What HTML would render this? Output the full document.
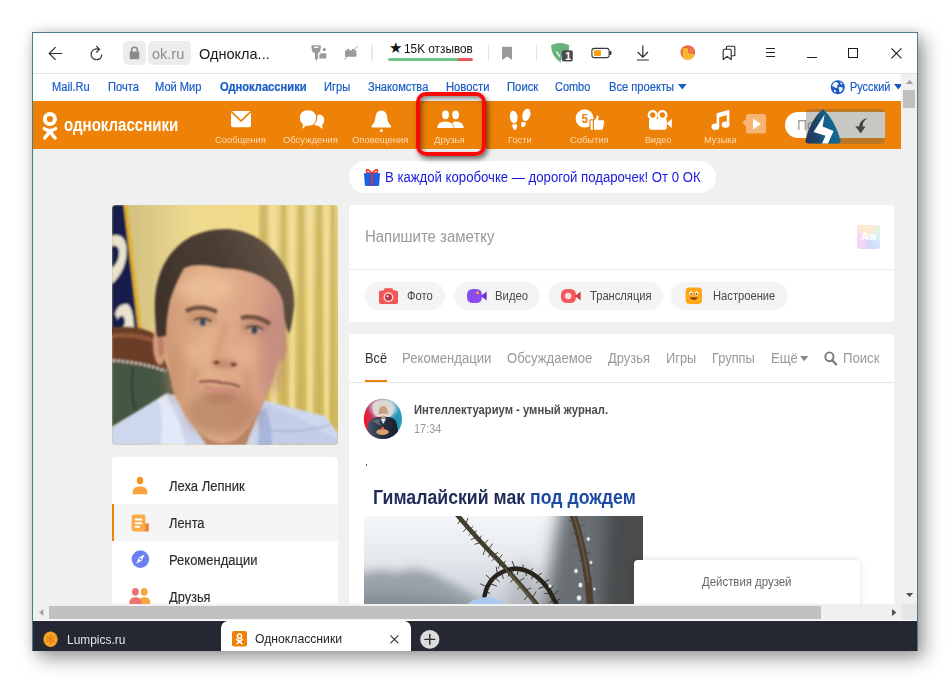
<!DOCTYPE html>
<html lang="ru">
<head>
<meta charset="utf-8">
<title>Одноклассники</title>
<style>
*{box-sizing:border-box;margin:0;padding:0}
html,body{width:950px;height:683px;overflow:hidden;background:#fff}
body{position:relative;font-family:"Liberation Sans",sans-serif;color:#333}
.a{position:absolute;white-space:nowrap;line-height:1}
.t{position:absolute;white-space:nowrap;line-height:1;transform-origin:0 0}
svg{position:absolute;overflow:visible}
#win{position:absolute;left:32px;top:32px;width:886px;height:619px;background:#fff;border:1px solid #4d7b89;border-bottom:none;box-shadow:6px 7px 18px rgba(0,0,0,.40),0 0 9px rgba(0,0,0,.11)}
#view{position:absolute;left:33px;top:74px;width:868px;height:530px;background:#f0f0f0;overflow:hidden}
.card{position:absolute;background:#fff;border-radius:4px}
.pill{position:absolute;background:#f4f4f4;border-radius:14px;height:28px;top:281.6px}
.nl{position:absolute;white-space:nowrap;line-height:1;font-size:12px;color:#1b5dc6;top:80.8px;transform-origin:0 0;-webkit-text-stroke:.2px #1b5dc6}
.hl{position:absolute;white-space:nowrap;line-height:1;font-size:9.5px;color:#fbdcb6;top:135px;text-align:center;transform-origin:0 0}
.tab{position:absolute;white-space:nowrap;line-height:1;font-size:14px;color:#999;top:351px;transform-origin:0 0}
.mi{position:absolute;white-space:nowrap;line-height:1;font-size:14px;color:#2b2b2b;-webkit-text-stroke:.15px #2b2b2b;left:169px;transform-origin:0 0}
.pt{position:absolute;white-space:nowrap;line-height:1;font-size:12px;color:#484848;top:290px;transform-origin:0 0}
</style>
</head>
<body>
<div id="win"></div>

<!-- ===== browser toolbar ===== -->
<div id="toolbar">
<div class="a" style="left:33px;top:73px;width:884px;height:1px;background:#e2e2e2"></div>
<!-- back -->
<svg style="left:46px;top:44px" width="20" height="20" viewBox="0 0 20 20"><path d="M16.2 9.5H3.4M9.6 3.1L3.2 9.5l6.4 6.4" fill="none" stroke="#2b2b2b" stroke-width="1.15"/></svg>
<!-- reload -->
<svg style="left:87px;top:44px" width="20" height="20" viewBox="0 0 20 20"><path d="M12.1 5.6A5.4 5.4 0 1 0 14.9 10.4" fill="none" stroke="#2b2b2b" stroke-width="1.15"/><path d="M9.3 2.2L12.5 5.3 9.3 8.5" fill="none" stroke="#2b2b2b" stroke-width="1.15"/></svg>
<!-- lock + host -->
<div class="a" style="left:123px;top:41px;width:23px;height:24px;background:#ececec;border-radius:5px"></div>
<svg style="left:128px;top:46px" width="13" height="14" viewBox="0 0 13 14"><path d="M3.6 6V4.2a2.9 2.9 0 0 1 5.8 0V6" fill="none" stroke="#8b8b8b" stroke-width="1.6"/><rect x="1.7" y="5.6" width="9.6" height="7.6" rx="1" fill="#8b8b8b"/></svg>
<div class="a" style="left:148px;top:41px;width:43px;height:24px;background:#ececec;border-radius:5px"></div>
<div class="t" id="t_host" style="left:152px;top:46px;font-size:15px;color:#8c8c8c;transform:scaleX(0.968)">ok.ru</div>
<div class="t" id="t_title" style="left:198.8px;top:46px;font-size:15px;color:#1a1a1a;transform:scaleX(0.968)">Однокла...</div>
<!-- key icon -->
<svg style="left:310px;top:44px" width="18" height="18" viewBox="0 0 18 18"><path d="M1.3 2.6Q1.3 1.2 2.7 1.2H9.6Q11 1.2 11 2.6L10.2 7.3Q10 8.6 8.6 8.8L8 9V14.6L6.4 16.7 4.9 14.6V9L4 8.8Q2.4 8.4 2.2 7.3Z" fill="#9b9b9b"/><rect x="3.9" y="2.6" width="4.6" height="1.3" rx=".6" fill="#fff"/><circle cx="14.3" cy="5.6" r="1.7" fill="#9b9b9b"/><path d="M9.3 14.6V11.7Q9.3 9.3 11.7 9.3H16.4V14.6Z" fill="#9b9b9b"/></svg>
<!-- plugin icon -->
<svg style="left:343px;top:44px" width="18" height="18" viewBox="0 0 18 18"><path d="M2 6.6H4V5h2.6v1.6h2.2V5h2.6v1.6H13.4V12.7H2Z" fill="#9b9b9b"/><path d="M1.2 15.7L14.7 2" stroke="#9b9b9b" stroke-width="1" fill="none"/></svg>
<div class="a" style="left:371px;top:45px;width:2px;height:16px;background:#e9e9e9"></div>
<!-- reviews -->
<div class="t" id="t_star" style="left:389px;top:41px;font-size:15px;color:#111;font-family:'DejaVu Sans',sans-serif">★</div>
<div class="t" id="t_rev" style="left:403.7px;top:42.7px;font-size:12px;color:#151515;transform:scaleX(0.984)">15K отзывов</div>
<div class="a" style="left:388px;top:58px;width:70px;height:3px;background:#6fc48b;border-radius:1.5px 0 0 1.5px"></div>
<div class="a" style="left:458px;top:58px;width:15px;height:3px;background:#e9575a;border-radius:0 1.5px 1.5px 0"></div>
<div class="a" style="left:488px;top:45px;width:1px;height:16px;background:#e4e4e4"></div>
<!-- bookmark -->
<svg style="left:501px;top:46px" width="12" height="15" viewBox="0 0 12 15"><path d="M1 .8H11V14L6 10.4 1 14Z" fill="#9b9b9b"/></svg>
<div class="a" style="left:536px;top:45px;width:1px;height:16px;background:#e4e4e4"></div>
<!-- adguard shield -->
<svg style="left:550px;top:42px" width="24" height="22" viewBox="0 0 24 22"><path d="M1 3.2Q10 -1.2 19.2 3.2Q19.4 7 17.6 10.4L13 8.4L10.6 20.6Q1.4 14.5 1 3.2Z" fill="#68b37b"/><path d="M6.4 9.4L9.8 14.6" stroke="#e9f5ec" stroke-width="1.6" fill="none"/><rect x="11.8" y="8.2" width="11" height="11.4" rx="2" fill="#4b4b4b"/></svg>
<div class="a" id="t_one" style="left:565px;top:51px;font-size:11px;font-weight:bold;color:#fff">1</div>
<!-- battery -->
<svg style="left:591px;top:47px" width="21" height="12" viewBox="0 0 21 12"><rect x=".9" y="1.4" width="17.2" height="9.2" rx="2.4" fill="#fff" stroke="#3a3a3a" stroke-width="1.1"/><rect x="3" y="3.2" width="6.9" height="5.7" fill="#ffa10a"/><path d="M18.6 4.1h1q.8 0 .8.8v2.2q0 .8-.8.8h-1z" fill="#222"/></svg>
<!-- download -->
<svg style="left:636px;top:45px" width="14" height="17" viewBox="0 0 14 17"><path d="M6.8.6V12M1.6 7L6.8 12.2 12 7M1 15h11.8" fill="none" stroke="#2b2b2b" stroke-width="1.15"/></svg>
<!-- profile blob -->
<svg style="left:680px;top:45px" width="16" height="16" viewBox="0 0 16 16"><defs><clipPath id="cpb"><circle cx="7.8" cy="7.5" r="7.3"/></clipPath></defs><circle cx="7.8" cy="7.5" r="7.3" fill="#e9694b"/><g clip-path="url(#cpb)"><path d="M2.8 16V4.6L4 3.2 7.6 2.9 8.6 8.4 13.3 8.7 14.5 11V16Z" fill="#f6b92f"/><path d="M10.2 3.4L10.6 7M12 4L12.4 7.6" stroke="#f2a04a" stroke-width=".8" fill="none"/></g></svg>
<!-- collections -->
<svg style="left:722px;top:45px" width="15" height="16" viewBox="0 0 15 16"><path d="M1.2 14.6V5.4Q1.2 4.2 2.4 4.2H8Q9.2 4.2 9.2 5.4V14.6L5.2 11.4Z" fill="none" stroke="#2b2b2b" stroke-width="1.15" stroke-linejoin="round"/><path d="M4.4 4V2.4Q4.4 1.2 5.6 1.2H11.6Q12.8 1.2 12.8 2.4V10.6L9.6 11" fill="none" stroke="#2b2b2b" stroke-width="1.15"/></svg>
<!-- menu -->
<div class="a" style="left:766px;top:48px;width:9px;height:1px;background:#222;box-shadow:0 4px 0 #222,0 8px 0 #222"></div>
<!-- window controls -->
<div class="a" style="left:807px;top:57px;width:10px;height:1px;background:#222"></div>
<div class="a" style="left:848px;top:48px;width:10px;height:10px;border:1px solid #1a1a1a"></div>
<svg style="left:891px;top:48px" width="11" height="11" viewBox="0 0 11 11"><path d="M.4.4l10 10M10.4.4l-10 10" stroke="#1a1a1a" stroke-width="1.1" fill="none"/></svg>
</div>

<!-- ===== page viewport ===== -->
<div id="view"></div>

<!-- ===== mail.ru portal strip ===== -->
<div id="portal">
<div class="a" style="left:33px;top:74px;width:868px;height:27px;background:#fff"></div>
<div class="nl" id="t_n1" style="left:52px;transform:scaleX(0.927)">Mail.Ru</div>
<div class="nl" id="t_n2" style="left:107.6px;transform:scaleX(0.927)">Почта</div>
<div class="nl" id="t_n3" style="left:155.3px;transform:scaleX(0.926)">Мой Мир</div>
<div class="nl" id="t_n4" style="left:219.6px;font-weight:bold;transform:scaleX(0.931)">Одноклассники</div>
<div class="nl" id="t_n5" style="left:324.3px;transform:scaleX(0.925)">Игры</div>
<div class="nl" id="t_n6" style="left:368.4px;transform:scaleX(0.924)">Знакомства</div>
<div class="nl" id="t_n7" style="left:445.8px;transform:scaleX(0.936)">Новости</div>
<div class="nl" id="t_n8" style="left:506.5px;transform:scaleX(0.941)">Поиск</div>
<div class="nl" id="t_n9" style="left:555px;transform:scaleX(0.912)">Combo</div>
<div class="nl" id="t_n10" style="left:609.1px;transform:scaleX(0.928)">Все проекты</div>
<svg style="left:678px;top:84px" width="9" height="6" viewBox="0 0 9 6"><path d="M0 0H8.6L4.3 5.4Z" fill="#1b5dc6"/></svg>
<svg style="left:830px;top:80px" width="16" height="15" viewBox="0 0 16 15"><circle cx="7.8" cy="7.2" r="7" fill="#1b5dc6"/><path d="M3.2 3.4Q5.4 1.4 7.6 2.4L8.8 4.2 7 5.6 7.6 7.4 5.4 8 4.2 6.4 2.2 6.6Q2.2 4.6 3.2 3.4ZM9.6 6.8L12.6 7.4 12.8 9.6 10.6 12.2 9 11.6 9.4 9.4 8.4 8.2ZM10.6 2.2L12.6 3.8 11.6 4.8 10.2 3.6ZM4.2 9.6L6 10.4 5.6 12.4 4 11.4Z" fill="#fff"/></svg>
<div class="nl" id="t_n11" style="left:849.9px;transform:scaleX(0.907)">Русский</div>
<svg style="left:894px;top:84px" width="9" height="6" viewBox="0 0 9 6"><path d="M0 0H8.6L4.3 5.4Z" fill="#1b5dc6"/></svg>
</div>

<!-- ===== OK orange header ===== -->
<div id="okhead">
<div class="a" style="left:33px;top:101px;width:868px;height:48px;background:#ee8208"></div>
<!-- logo -->
<svg style="left:40px;top:110px" width="20" height="32" viewBox="0 0 20 32"><circle cx="9.9" cy="9" r="5.05" fill="none" stroke="#fff" stroke-width="3.9"/><path d="M4.3 18.6Q9.9 22.6 15.5 18.6" fill="none" stroke="#fff" stroke-width="3.5" stroke-linecap="round"/><path d="M4.7 28L9.9 21.6 15.1 28" fill="none" stroke="#fff" stroke-width="3.5" stroke-linecap="round" stroke-linejoin="round"/></svg>
<div class="t" id="t_logo" style="left:64.1px;top:116.3px;font-size:18px;font-weight:bold;color:#fff;transform:scaleX(0.836)">одноклассники</div>
<!-- messages -->
<svg style="left:231px;top:110.8px" width="20" height="17" viewBox="0 0 20 17"><rect x="0" y="0" width="20" height="16.2" rx="2" fill="#fff"/><path d="M.6 .8L10 10 19.4 .8" fill="none" stroke="#ee8208" stroke-width="1.7"/></svg>
<div class="hl" id="t_h1" style="left:215.4px;transform:scaleX(0.985)">Сообщения</div>
<!-- discussions -->
<svg style="left:299px;top:110px" width="26" height="20" viewBox="0 0 26 20"><path d="M19 4.6Q25.2 4.6 25.2 10.3Q25.2 13.4 23.2 15L23.6 19 19.6 16Q16.4 16 15 14Z" fill="#fff"/><ellipse cx="9" cy="8" rx="9.3" ry="8.9" fill="#ee8208"/><path d="M9 .2Q17 .2 17 8Q17 15.8 9 15.8Q8 15.8 7.2 15.6L3.4 19 4 14Q.9 12 .9 8Q.9 .2 9 .2Z" fill="#fff"/></svg>
<div class="hl" id="t_h2" style="left:283.4px;transform:scaleX(0.992)">Обсуждения</div>
<!-- notifications -->
<svg style="left:371px;top:109.5px" width="21" height="22" viewBox="0 0 21 22"><path d="M10.3 .6Q15.6 .6 16.2 7.2Q16.6 12.4 19.6 15.2Q20.6 16.2 19.8 17.6H.8Q0 16.2 1 15.2Q4 12.4 4.4 7.2Q5 .6 10.3 .6Z" fill="#fff"/><circle cx="10.3" cy="20.7" r="1.4" fill="#fff"/></svg>
<div class="hl" id="t_h3" style="left:352px;transform:scaleX(0.994)">Оповещения</div>
<!-- friends -->
<svg style="left:437px;top:109.5px" width="28" height="19" viewBox="0 0 28 19"><ellipse cx="18.6" cy="4.8" rx="3.4" ry="4.4" fill="#fff"/><path d="M14.6 18V16.2Q15 11.4 18.6 11.4Q26.6 11.8 26.8 18Z" fill="#fff"/><path d="M-.6 18.6Q.2 10.4 8.5 10.6Q16.4 10.4 17.6 18.6Z" fill="#ee8208"/><ellipse cx="8.5" cy="4.8" rx="3.4" ry="4.4" fill="#fff"/><path d="M.2 18Q.6 11.6 8.5 11.6Q16 11.6 16.8 18Z" fill="#fff"/></svg>
<div class="hl" id="t_h4" style="left:434.2px;transform:scaleX(0.993)">Друзья</div>
<!-- guests -->
<svg style="left:509px;top:108px" width="23" height="23" viewBox="0 0 23 23"><ellipse cx="4.7" cy="9" rx="3.8" ry="6.3" transform="rotate(-6 4.7 9)" fill="#fff"/><path d="M3.2 16.6L8 16.2Q8.4 21.6 6 22Q3.6 22.2 3.2 16.6Z" fill="#fff"/><ellipse cx="17.4" cy="6.9" rx="3.9" ry="6.3" transform="rotate(16 17.4 6.9)" fill="#fff"/><path d="M12.6 13.8L17.2 14.6Q16 19.6 13.6 19.2Q11.4 18.6 12.6 13.8Z" fill="#fff"/></svg>
<div class="hl" id="t_h5" style="left:507.7px;transform:scaleX(0.975)">Гости</div>
<!-- events -->
<svg style="left:575px;top:109px" width="30" height="22" viewBox="0 0 30 22"><ellipse cx="9.6" cy="9.4" rx="9" ry="9.2" fill="#fff"/><g stroke="#ee8208" stroke-width="2.4" stroke-linejoin="round"><rect x="15.6" y="11.4" width="2.2" height="9.4" fill="#fff"/><path d="M19 20.8V11.4Q21.8 9.6 22 6.4Q23.6 6 23.6 8Q23.6 9.8 23 11.2H28Q29.4 11.2 29.2 12.6L28 19.6Q27.8 20.8 26.6 20.8Z" fill="#fff"/></g><rect x="15.6" y="11.4" width="2.2" height="9.4" fill="#fff"/><path d="M19 20.8V11.4Q21.8 9.6 22 6.4Q23.6 6 23.6 8Q23.6 9.8 23 11.2H28Q29.4 11.2 29.2 12.6L28 19.6Q27.8 20.8 26.6 20.8Z" fill="#fff"/></svg>
<div class="t" id="t_five" style="left:581.6px;top:112.6px;font-size:12px;font-weight:bold;color:#ee8208">5</div>
<div class="hl" id="t_h6" style="left:569.7px;transform:scaleX(0.984)">События</div>
<!-- video -->
<svg style="left:647px;top:108.5px" width="26" height="22" viewBox="0 0 26 22"><rect x="2" y="9.4" width="17.8" height="11.4" rx="2.4" fill="#fff"/><path d="M19.6 14.6L24.8 9.8V19.2Z" fill="#fff"/><circle cx="5.7" cy="6" r="3.9" fill="#ee8208" stroke="#fff" stroke-width="2.4"/><circle cx="15.4" cy="6" r="3.9" fill="#ee8208" stroke="#fff" stroke-width="2.4"/></svg>
<div class="hl" id="t_h7" style="left:645.4px;transform:scaleX(0.947)">Видео</div>
<!-- music -->
<svg style="left:711px;top:108.5px" width="20" height="22" viewBox="0 0 20 22"><path d="M5.6 17.6V4.2L18.4 .8V15.4H15.8V6.2L8.2 8.2V17.6Z" fill="#fff"/><ellipse cx="4.4" cy="17.8" rx="3.9" ry="3.2" fill="#fff"/><ellipse cx="14.6" cy="15.6" rx="3.9" ry="3.2" fill="#fff"/></svg>
<div class="hl" id="t_h8" style="left:704px;transform:scaleX(0.973)">Музыка</div>
<!-- player widget -->
<svg style="left:742px;top:114px" width="24" height="20" viewBox="0 0 24 20"><path d="M.3 8.6L4 5V2.4Q4 0 6.4 0H21.6Q24 0 24 2.4V17.2Q24 19.6 21.6 19.6H6.4Q4 19.6 4 17.2V12.2Z" fill="#f7b573"/><path d="M11 4.6L19 10 11 15.4Z" fill="#fff"/></svg>
<!-- search -->
<div class="a" style="left:785px;top:112px;width:100px;height:26px;background:#fff;border-radius:13px 0 0 13px"></div>
<div class="t" id="t_srch" style="left:797px;top:118px;font-size:14px;color:#999">По</div>
<!-- overlay widget -->
<div class="a" style="left:805.5px;top:109px;width:79px;height:34.5px;background:rgba(100,100,88,.36);border-radius:4px"></div>
<svg style="left:805px;top:108px" width="37" height="36" viewBox="0 0 37 36"><defs><linearGradient id="lg1" x1="0" y1="0" x2="1" y2="0"><stop offset="0" stop-color="#213a5e"/><stop offset=".3" stop-color="#1f4268"/><stop offset=".55" stop-color="#15608a"/><stop offset="1" stop-color="#146a96"/></linearGradient></defs><path d="M17.9 1Q30 12 35.6 32.6Q36 35.5 33 35.5H3.6Q.2 35.5 .5 32.3Q5 12 17.9 1Z" fill="url(#lg1)"/><path d="M19.6 6.5L8.5 24 20.5 27.8 17 35.5H23L28.6 23 17.6 18.6Z" fill="#fff"/></svg>
<svg style="left:854px;top:116px" width="16" height="19" viewBox="0 0 16 19"><path d="M13.8 2Q5.800 3.600 5 10.400L1.200 10.200 6.800 17.600 11.400 10.600 8.600 10.6Q8.400 5 13.800 2Z" fill="#454545"/></svg>
</div>

<!-- ===== content ===== -->
<div id="content">
<!-- promo pill -->
<div class="a" style="left:349px;top:161px;width:367px;height:32px;background:#fff;border-radius:16px"></div>
<svg style="left:363px;top:167px" width="18" height="20" viewBox="0 0 18 20"><path d="M9 6.2Q4.4 1.2 3.4 3.4Q2.6 5.6 9 6.6Q15.4 5.6 14.6 3.4Q13.6 1.2 9 6.2Z" fill="none" stroke="#f02a2a" stroke-width="1.5"/><path d="M1 6.8Q1 6 1.8 6H16.2Q17 6 17 6.8L16.2 17.6Q16.1 19 14.8 19H3.2Q1.9 19 1.8 17.6Z" fill="#1b5fe2"/><rect x="8.1" y="6" width="1.8" height="13" fill="#f02a2a"/></svg>
<div class="t" id="t_promo" style="left:385.1px;top:170px;font-size:14px;color:#1a1ae0;transform:scaleX(0.940)">В каждой коробочке — дорогой подарочек! От 0 ОК</div>

<!-- note card -->
<div class="card" style="left:349px;top:205px;width:545px;height:117px"></div>
<div class="a" style="left:349px;top:269px;width:545px;height:1px;background:#ebebeb"></div>
<div class="t" id="t_note" style="left:364.6px;top:228.5px;font-size:16px;color:#999;transform:scaleX(0.935)">Напишите заметку</div>
<div class="a" style="left:857px;top:225px;width:22.6px;height:23.7px;border-radius:3px;background:conic-gradient(from -40deg,#fde9d2 0,#fbe9d0 18%,#e2f1e6 27%,#d6f2f4 38%,#d4e0fa 50%,#d6d6fa 60%,#f6d4f6 72%,#fad8f4 88%,#fde9d2 100%)"></div>
<div class="t" id="t_aa" style="left:861px;top:230.5px;font-size:11.5px;font-weight:bold;color:#fff">Aa</div>

<!-- pills -->
<div class="pill" style="left:365px;width:80px"></div>
<svg style="left:378px;top:287px" width="21" height="18" viewBox="0 0 21 18"><path d="M1 5.6Q1 3.6 3 3.6H5.4L6.8 1.2H14.2L15.6 3.6H18Q20 3.6 20 5.6V15Q20 17 18 17H3Q1 17 1 15Z" fill="#f25555"/><circle cx="10.5" cy="10.2" r="5" fill="#fbd0d0"/><circle cx="10.5" cy="10.2" r="3.4" fill="#c62f3a"/><circle cx="9.6" cy="9.2" r="1" fill="#fff"/></svg>
<div class="pt" id="t_p1" style="left:407.3px;transform:scaleX(0.936)">Фото</div>

<div class="pill" style="left:454px;width:86px"></div>
<svg style="left:466px;top:287px" width="22" height="18" viewBox="0 0 22 18"><path d="M1 8Q1 2 7 2H10Q16 2 16 8V10Q16 16 10 16H7Q1 16 1 10Z" fill="#8a4cf0"/><path d="M15 9L20.6 4.4V13.6Z" fill="#6a2fd6"/><circle cx="11.6" cy="5.8" r="1.5" fill="#ffa31a"/></svg>
<div class="pt" id="t_p2" style="left:495.4px;transform:scaleX(0.944)">Видео</div>

<div class="pill" style="left:548px;width:115px"></div>
<svg style="left:560px;top:287px" width="22" height="18" viewBox="0 0 22 18"><path d="M1 8Q1 2 7 2H10Q16 2 16 8V10Q16 16 10 16H7Q1 16 1 10Z" fill="#f25a5a"/><path d="M15 9L20.6 4.4V13.6Z" fill="#d93a44"/><circle cx="8.2" cy="9" r="3.2" fill="#fcdcdc"/></svg>
<div class="pt" id="t_p3" style="left:590px;transform:scaleX(0.930)">Трансляция</div>

<div class="pill" style="left:671px;width:117px"></div>
<svg style="left:685px;top:287px" width="18" height="18" viewBox="0 0 18 18"><rect x=".6" y=".6" width="16.4" height="16.4" rx="4" fill="#ffa61a"/><ellipse cx="6" cy="6.4" rx="1.7" ry="2" fill="#fff"/><ellipse cx="11.6" cy="6.4" rx="1.7" ry="2" fill="#fff"/><circle cx="6.2" cy="6.8" r=".9" fill="#5a3200"/><circle cx="11.4" cy="6.8" r=".9" fill="#5a3200"/><path d="M4.6 10.4Q8.8 15 13 10.4Z" fill="#6a2c00"/></svg>
<div class="pt" id="t_p4" style="left:713.1px;transform:scaleX(0.932)">Настроение</div>

<!-- feed card -->
<div class="card" style="left:349px;top:334px;width:545px;height:280px"></div>
<div class="a" style="left:349px;top:382px;width:545px;height:1px;background:#e6e6e6"></div>
<div class="a" style="left:364.5px;top:379.5px;width:22.5px;height:2.5px;background:#ee8208"></div>
<div class="tab" id="t_f1" style="left:364.6px;color:#333;transform:scaleX(0.916)">Всё</div>
<div class="tab" id="t_f2" style="left:402.2px;transform:scaleX(0.938)">Рекомендации</div>
<div class="tab" id="t_f3" style="left:506.7px;transform:scaleX(0.935)">Обсуждаемое</div>
<div class="tab" id="t_f4" style="left:607.9px;transform:scaleX(0.923)">Друзья</div>
<div class="tab" id="t_f5" style="left:665.5px;transform:scaleX(0.917)">Игры</div>
<div class="tab" id="t_f6" style="left:712px;transform:scaleX(0.917)">Группы</div>
<div class="tab" id="t_f7" style="left:770.5px;transform:scaleX(0.939)">Ещё</div>
<svg style="left:800.3px;top:356px" width="9" height="6" viewBox="0 0 9 6"><path d="M0 0H8.4L4.2 5.2Z" fill="#8a8a8a"/></svg>
<svg style="left:824px;top:351px" width="14" height="15" viewBox="0 0 14 15"><ellipse cx="5.4" cy="5.8" rx="4.1" ry="4.4" fill="none" stroke="#7a7a7a" stroke-width="1.9"/><path d="M8.2 9.2L12.2 13.4" stroke="#7a7a7a" stroke-width="2.2" stroke-linecap="round"/></svg>
<div class="tab" id="t_f8" style="left:843.2px;transform:scaleX(0.938)">Поиск</div>

<!-- post header -->
<div class="t" id="t_post" style="left:413.6px;top:403.5px;font-size:12px;font-weight:bold;color:#4a4a4a;transform:scaleX(0.937)">Интеллектуариум - умный журнал.</div>
<div class="t" id="t_time" style="left:413.6px;top:423px;font-size:12px;color:#999;transform:scaleX(0.912)">17:34</div>
<div class="a" style="left:365.5px;top:464px;width:1.5px;height:1.5px;background:#555"></div>

<!-- post image title -->
<div class="t" id="t_pt1" style="left:372.7px;top:487px;font-size:20px;font-weight:bold;color:#1f2b57;transform:scaleX(0.885)">Гималайский мак <span style="color:#1d4aa3">под дождем</span></div>
</div>

<div id="side">
<!-- profile photo -->
<svg style="left:112px;top:205px" width="226" height="240" viewBox="112 205 226 240">
<defs>
<clipPath id="pc"><rect x="112" y="205" width="226" height="240" rx="4"/></clipPath>
<filter id="bl1" x="-10%" y="-10%" width="120%" height="120%"><feGaussianBlur stdDeviation="1.1"/></filter>
<filter id="bl3" x="-20%" y="-20%" width="140%" height="140%"><feGaussianBlur stdDeviation="3"/></filter>
<filter id="bl6" x="-30%" y="-30%" width="160%" height="160%"><feGaussianBlur stdDeviation="6"/></filter>
<linearGradient id="wallg" x1="112" y1="0" x2="262" y2="0" gradientUnits="userSpaceOnUse"><stop offset="0" stop-color="#cdb97c"/><stop offset=".3" stop-color="#dfcb88"/><stop offset=".55" stop-color="#efdb8e"/><stop offset="1" stop-color="#f1da88"/></linearGradient>
<linearGradient id="curtv" x1="0" y1="205" x2="0" y2="445" gradientUnits="userSpaceOnUse"><stop offset="0" stop-color="#e6d286"/><stop offset=".5" stop-color="#dec66c"/><stop offset="1" stop-color="#d4b856"/></linearGradient>
<linearGradient id="hairg" x1="160" y1="300" x2="290" y2="230" gradientUnits="userSpaceOnUse"><stop offset="0" stop-color="#3f332b"/><stop offset=".5" stop-color="#4a3d33"/><stop offset="1" stop-color="#6b5a4c"/></linearGradient>
<linearGradient id="sking" x1="165" y1="0" x2="290" y2="0" gradientUnits="userSpaceOnUse"><stop offset="0" stop-color="#d09a76"/><stop offset=".35" stop-color="#e2b08a"/><stop offset=".7" stop-color="#dca486"/><stop offset="1" stop-color="#c28a7e"/></linearGradient>
</defs>
<g clip-path="url(#pc)">
<rect x="112" y="205" width="226" height="240" fill="url(#wallg)"/>
<!-- curtains -->
<rect x="258" y="205" width="80" height="240" fill="url(#curtv)"/>
<g filter="url(#bl1)" fill="#c9b25e" opacity=".75"><rect x="260" y="205" width="7" height="240"/><rect x="281" y="205" width="5" height="240"/><rect x="298" y="205" width="6" height="240"/><rect x="316" y="205" width="6" height="240"/><rect x="331" y="205" width="4" height="240"/></g>
<g filter="url(#bl1)" fill="#f3e29e" opacity=".8"><rect x="270" y="205" width="7" height="240"/><rect x="289" y="205" width="6" height="240"/><rect x="307" y="205" width="6" height="240"/><rect x="324" y="205" width="5" height="240"/></g>
<!-- flag -->
<g filter="url(#bl1)">
<path d="M112 205H124.5L139.5 336H112Z" fill="#171b4c"/>
<path d="M125.5 205L140.5 336" stroke="#e0b02e" stroke-width="3.6"/>
<path d="M112 236Q123 232 126.5 246Q128 268 113 283L112 283V268Q120 262 119 250Q117 244 112 246Z" fill="#e9e2cf"/>
<path d="M115 314Q118 303 127 304Q133.5 307 134 330L121 331Q128 322 123 316Q119 315 118 320Z" fill="#e9e2cf"/>
</g>
<!-- chair -->
<g filter="url(#bl1)">
<path d="M112 327Q140 325 155 334L170 373L112 362Z" fill="#6a3c26"/>
<path d="M112 336Q138 333 156 342" stroke="#95593a" stroke-width="4" fill="none"/>
<path d="M112 361L170 371L178 392L112 427Z" fill="#445742"/>
<path d="M133 368Q130 395 136 412" stroke="#33443a" stroke-width="3" fill="none"/>
<path d="M113 360.5Q140 362 166 371" stroke="#d8d4cc" stroke-width="2.6" stroke-dasharray="2.6 1.8" fill="none"/>
</g>
<!-- shirt -->
<g filter="url(#bl1)">
<path d="M112 427L167 393L200 405L262 400L325 416L338 433V445H112Z" fill="#cdd7ee"/>
<path d="M262 402L300 418L338 440V445H255Z" fill="#c3cde8"/>
<path d="M166 394Q180 420 186 445H160Q165 420 158 399Z" fill="#e2e9f8"/>
<path d="M256 412Q262 428 258 445H272Q272 425 266 408Z" fill="#a9b6dc"/>
<path d="M270 430Q300 434 330 425" stroke="#9aa4c2" stroke-width="1" fill="none"/>
</g>
<!-- neck -->
<path d="M171 385L206 445H246L266 392Z" fill="#b98462" filter="url(#bl1)"/>
<!-- ears -->
<g filter="url(#bl1)">
<ellipse cx="160" cy="344" rx="7" ry="21" fill="#d49a7c"/>
<ellipse cx="161" cy="345" rx="3" ry="12" fill="#c07e68"/>
<ellipse cx="281" cy="346" rx="5.5" ry="15" fill="#c48e7e"/>
</g>
<!-- face -->
<path d="M164 285Q160 330 168 365Q172 398 190 422Q204 441 222 443Q240 443 254 420Q268 398 279 360Q290 325 289 290Q270 250 225 252Q180 252 164 285Z" fill="url(#sking)" filter="url(#bl1)"/>
<!-- face shading -->
<g filter="url(#bl6)">
<ellipse cx="222" cy="412" rx="36" ry="24" fill="#b07d60" opacity=".65"/>
<ellipse cx="272" cy="350" rx="12" ry="45" fill="#c28a80" opacity=".6"/>
<ellipse cx="205" cy="288" rx="30" ry="13" fill="#efc49c" opacity=".7"/>
<ellipse cx="176" cy="372" rx="8" ry="30" fill="#c48e6c" opacity=".6"/>
<ellipse cx="244" cy="356" rx="13" ry="9" fill="#eeb89a" opacity=".6"/>
<ellipse cx="196" cy="352" rx="12" ry="10" fill="#ecba94" opacity=".6"/>
</g>
<g filter="url(#bl3)">
<ellipse cx="202" cy="319" rx="15" ry="7" fill="#a8765c" opacity=".55"/>
<ellipse cx="255" cy="327" rx="15" ry="7" fill="#a87464" opacity=".55"/>
<path d="M226 322Q222 345 214 358" stroke="#c9906e" stroke-width="5" fill="none" opacity=".7"/>
<ellipse cx="224" cy="364" rx="13" ry="4" fill="#a86c54" opacity=".6"/>
<ellipse cx="220" cy="398" rx="16" ry="5" fill="#a87258" opacity=".5"/>
<path d="M196 368Q192 380 196 392" stroke="#b98468" stroke-width="4" fill="none" opacity=".6"/>
<path d="M246 372Q250 384 245 396" stroke="#b98468" stroke-width="4" fill="none" opacity=".6"/>
</g>
<!-- features -->
<g filter="url(#bl1)">
<path d="M186 311Q200 304 217 312" stroke="#5e4234" stroke-width="4.2" fill="none" opacity=".85"/>
<path d="M241 318Q256 314 270 324" stroke="#5e4234" stroke-width="4.2" fill="none" opacity=".85"/>
<ellipse cx="202.5" cy="322.5" rx="6.5" ry="3.3" fill="#caa696"/>
<ellipse cx="254.5" cy="330.5" rx="6.5" ry="3.3" fill="#caa696"/>
<circle cx="202.7" cy="322.5" r="3.2" fill="#3c4a5a"/>
<circle cx="254.4" cy="330.5" r="3.2" fill="#3a4450"/>
<path d="M194.5 320Q203 316 211 321.5" stroke="#3e2c22" stroke-width="1.7" fill="none"/>
<path d="M246.5 328Q255 324 262.5 329.5" stroke="#3e2c22" stroke-width="1.7" fill="none"/>
<ellipse cx="216.5" cy="362.5" rx="3.2" ry="1.7" fill="#6e4032"/>
<ellipse cx="233.5" cy="364.5" rx="3.2" ry="1.7" fill="#6e4032"/>
<path d="M199 382Q215 380 222 383Q232 383 240 387" stroke="#8c4f48" stroke-width="2.2" fill="none"/>
<path d="M204 386Q220 394 236 390" stroke="#cf8a7c" stroke-width="4" fill="none" opacity=".9"/>
</g>
<!-- hair -->
<path d="M157 337Q152 300 158 280Q166 250 192 236Q210 228 229 229Q262 232 282 262Q296 284 294 308Q292 326 289 334Q284 322 284 310Q283 292 270 282Q250 268 222 268Q196 262 184 268Q176 282 170 300Q166 318 166 336Z" fill="url(#hairg)" filter="url(#bl1)"/>
</g>
</svg>

<!-- menu card -->
<div class="card" style="left:112px;top:457px;width:226px;height:160px;border-radius:4px 4px 0 0"></div>
<div class="a" style="left:112px;top:504px;width:226px;height:36.5px;background:#f5f5f5"></div>
<div class="a" style="left:112px;top:504px;width:2.2px;height:36.5px;background:#ee8208"></div>
<svg style="left:131px;top:476px" width="18" height="19" viewBox="0 0 18 19"><ellipse cx="9" cy="4.6" rx="3.2" ry="3.8" fill="#f7931e"/><path d="M1.8 18.2V15.6Q2 10.6 9 10.6Q16 10.6 16.2 15.6V18.2Z" fill="#f9a53e"/></svg>
<svg style="left:131px;top:513.5px" width="19" height="19" viewBox="0 0 19 19"><path d="M12.4 17.4H16.8Q17.8 17.4 17.8 16.4V9.6H14Z" fill="#ef7f3a"/><path d="M.6 3Q.6 .6 3 .6H12Q14.4 .6 14.4 3V15Q14.4 17.4 12 17.4H3Q.6 17.4 .6 15Z" fill="#fbab4a"/><rect x="3.8" y="4.6" width="7.4" height="2" rx=".6" fill="#fff"/><rect x="3.8" y="8.2" width="7.4" height="2" rx=".6" fill="#fff"/><rect x="3.8" y="11.8" width="5" height="2" rx=".6" fill="#fff"/></svg>
<svg style="left:131px;top:550px" width="19" height="19" viewBox="0 0 19 19"><ellipse cx="9.4" cy="9.1" rx="8.8" ry="8.8" fill="#6b80f2"/><path d="M13.6 4.4L10.8 10.6 5.2 13.8 8 7.6Z" fill="#fff"/><circle cx="9.4" cy="9.1" r="1.1" fill="#6b80f2"/></svg>
<svg style="left:129px;top:587px" width="22" height="19" viewBox="0 0 22 19"><ellipse cx="15.2" cy="4.8" rx="3.4" ry="3.9" fill="#f9a53e"/><path d="M9 18.6V15Q9.4 10.2 15.2 10.2Q21 10.2 21.4 15V18.6Z" fill="#f9a53e"/><ellipse cx="6.4" cy="4.8" rx="3.4" ry="3.9" fill="#ef7070"/><path d="M.4 18.6V15Q.8 10.2 6.4 10.2Q12 10.2 12.4 15V18.6Z" fill="#ef7070"/></svg>
<div class="mi" id="t_m1" style="left:169px;top:478.5px;transform:scaleX(0.930)">Леха Лепник</div>
<div class="mi" id="t_m2" style="left:169px;top:515.7px;transform:scaleX(0.916)">Лента</div>
<div class="mi" id="t_m3" style="left:169px;top:552.8px;transform:scaleX(0.927)">Рекомендации</div>
<div class="mi" id="t_m4" style="left:169px;top:589.9px;transform:scaleX(0.914)">Друзья</div>
</div>

<div id="media">
<!-- einstein avatar -->
<svg style="left:363px;top:398px" width="40" height="42" viewBox="363 398 40 42">
<defs><clipPath id="avc"><ellipse cx="382.9" cy="418.9" rx="19.1" ry="20.2"/></clipPath>
<filter id="ab" x="-20%" y="-20%" width="140%" height="140%"><feGaussianBlur stdDeviation=".7"/></filter>
<filter id="ab3" x="-30%" y="-30%" width="160%" height="160%"><feGaussianBlur stdDeviation="2.2"/></filter>
<linearGradient id="avg" x1="363" y1="0" x2="403" y2="0" gradientUnits="userSpaceOnUse"><stop offset="0" stop-color="#e8141f"/><stop offset=".22" stop-color="#d03058"/><stop offset=".42" stop-color="#9a6a9a"/><stop offset=".62" stop-color="#5a90b8"/><stop offset=".78" stop-color="#1f8fb0"/><stop offset="1" stop-color="#2aa0bc"/></linearGradient>
<linearGradient id="jkg" x1="368" y1="0" x2="397" y2="0" gradientUnits="userSpaceOnUse"><stop offset="0" stop-color="#4a5468"/><stop offset=".45" stop-color="#2c3346"/><stop offset="1" stop-color="#1a1e2a"/></linearGradient></defs>
<g clip-path="url(#avc)"><rect x="363" y="398" width="40" height="42" fill="url(#avg)"/>
<ellipse cx="372" cy="404" rx="9" ry="6" fill="#b85a8a" filter="url(#ab3)" opacity=".8"/>
<ellipse cx="384" cy="408" rx="13" ry="10" fill="#dfe3ee" filter="url(#ab3)" opacity=".85"/>
<g filter="url(#ab)">
<path d="M367.5 428Q368 419 376 417.5L383 416L391 417.5Q397 419 397.5 428L399 442H366Z" fill="url(#jkg)"/>
<path d="M372.8 410Q371.5 402.5 377.5 401Q383.5 399.5 389.5 401.5Q394.5 404 393.2 411Q392.5 416 389 417L378 417Q373.5 415.5 372.8 410Z" fill="#dcd8d4"/>
<ellipse cx="383.3" cy="412" rx="4.5" ry="6.2" fill="#c9a082"/>
<path d="M379.5 415.8Q383.3 413.6 387.2 415.8" stroke="#ece6de" stroke-width="1.7" fill="none"/>
<path d="M379 406.5Q383 403.5 387.5 406.5" stroke="#dcd8d4" stroke-width="2" fill="none"/>
<path d="M380.4 418.5L383.3 424 386.2 418.5Z" fill="#dfe2ea"/>
<path d="M372 421L379 418.5 381 426Z" fill="#6a7280" opacity=".8"/>
<ellipse cx="382.5" cy="432" rx="6.3" ry="3" fill="#d8a070"/>
<circle cx="382.5" cy="428.3" r="1.5" fill="#e2603c"/>
</g></g>
</svg>

<!-- poppy photo -->
<svg style="left:364px;top:516px" width="279" height="88" viewBox="364 516 279 88">
<defs>
<clipPath id="ppc"><rect x="364" y="516" width="279" height="88"/></clipPath>
<filter id="pb1" x="-10%" y="-10%" width="120%" height="120%"><feGaussianBlur stdDeviation=".45"/></filter>
<filter id="pb5" x="-30%" y="-30%" width="160%" height="160%"><feGaussianBlur stdDeviation="5"/></filter>
<filter id="pb9" x="-30%" y="-30%" width="160%" height="160%"><feGaussianBlur stdDeviation="8"/></filter>
<linearGradient id="ppg" x1="0" y1="516" x2="0" y2="604" gradientUnits="userSpaceOnUse"><stop offset="0" stop-color="#f4f6f9"/><stop offset=".5" stop-color="#e4e8ed"/><stop offset="1" stop-color="#c8ced6"/></linearGradient>
</defs>
<g clip-path="url(#ppc)">
<rect x="364" y="516" width="279" height="88" fill="url(#ppg)"/>
<g filter="url(#pb9)">
<path d="M562 500H670V630H540Q552 560 562 500Z" fill="#686e72"/>
<path d="M606 500H670V630H600Z" fill="#484c4e"/>
<path d="M520 560Q540 575 545 630H500Z" fill="#b4b8bb"/>
</g>
<g filter="url(#pb5)">
<path d="M345 580Q375 566 398 573Q418 563 448 582Q470 592 500 614H345Z" fill="#9aa1a8"/>
<path d="M345 597Q400 586 465 604V616H345Z" fill="#878e96"/>
</g>
<g filter="url(#pb1)" fill="none" stroke-linecap="round">
<path d="M456.5 514Q478 540 503 565Q522 586 539 607" stroke="#45412f" stroke-width="4.6"/>
<path d="M484.5 596Q489 572 515 568.5Q534 569 549 590Q553 598 558 607" stroke="#28241e" stroke-width="4.4"/>
<path d="M572.5 513Q583 545 588 580Q589 594 590.5 607" stroke="#4d4030" stroke-width="7"/>
<path d="M460.8 519.2l-2.7 4.6M465.2 524.4l2.8 -5.9M467.5 526.9l-4.1 4.6M469.7 529.5l3.3 -2.9M472.0 532.1l-3.1 3.1M474.3 534.6l1.9 -4.0M476.6 537.2l-5.3 2.3M478.9 539.8l2.5 -3.9M481.2 542.3l-6.2 1.9M483.6 544.8l4.1 -4.7M485.9 547.4l-2.8 7.2M488.3 549.9l4.1 -6.0M490.7 552.4l-2.0 4.3M493.1 555.0l4.8 -2.3M495.6 557.5l-3.7 3.1M498.0 560.0l4.0 -5.1M500.5 562.5l-2.1 5.8M503.0 565.0l2.1 -3.9M506.8 569.2l-4.6 4.8M510.5 573.4l4.3 -3.2M514.2 577.6l-3.5 4.6M517.9 581.8l6.1 -3.5M521.5 586.0l-4.1 3.0M525.1 590.2l5.8 -2.0M528.6 594.4l-4.2 5.4M532.1 598.6l3.7 -6.8M535.6 602.8l-5.2 2.4M539.0 607.0l3.7 -3.0" stroke="#3c362c" stroke-width=".9"/>
<path d="M485.6 591.4l4.2 1.9M487.2 587.2l-6.7 -3.3M489.1 583.4l7.4 2.5M491.5 580.1l-5.2 -4.9M494.4 577.1l4.9 4.6M497.6 574.6l-1.4 -7.6M501.3 572.4l2.0 6.0M505.5 570.7l-0.8 -4.6M510.0 569.4l-1.6 6.8M515.0 568.5l-2.8 -7.1M518.8 568.8l-1.6 5.7M522.4 569.5l0.8 -4.5M526.0 570.6l0.3 5.1M529.6 572.2l3.1 -3.6M533.0 574.1l-1.4 4.8M536.4 576.5l5.1 -3.2M539.6 579.2l-3.0 3.8M542.8 582.4l6.1 -2.5M546.0 586.0l-7.2 2.5M549.0 590.0l4.2 -3.7M550.6 593.2l-5.8 0.5M552.4 596.6l5.5 -6.0M553.7 599.1l-3.8 3.5M555.1 601.7l4.7 -2.6M556.5 604.3l-5.0 4.5M558.0 607.0l3.7 -2.5" stroke="#2a2620" stroke-width=".9"/>
<path d="M574.5 519.4l-5.4 1.3M576.5 525.9l7.6 -0.7M578.3 532.5l-6.0 0.9M580.0 539.1l5.1 -4.3M581.6 545.8l-7.4 -0.4M583.1 552.5l7.3 0.6M584.5 559.3l-5.4 1.6M585.8 566.1l4.6 -0.2M586.9 573.0l-3.7 2.5M588.0 580.0l4.4 -2.3M588.5 586.9l-4.7 2.7M589.1 593.8l3.8 -1.8M589.8 600.4l-4.4 1.1M590.5 607.0l4.1 1.1" stroke="#4a4030" stroke-width=".8" opacity=".8"/>
<path d="M574 516Q584 548 588.5 582" stroke="#6f6148" stroke-width="1.8" opacity=".7"/>
<path d="M505 568Q522 588 537 606" stroke="#6c6a4a" stroke-width="1.6" opacity=".7"/>
</g>
<g filter="url(#pb1)">
<path d="M467 604Q476 597.5 487 597Q498 597.5 504 604Z" fill="#a9c9f0"/>
<g fill="#eef0f2" stroke="#8a9094" stroke-width=".5"><ellipse cx="588.3" cy="539" rx="1.7" ry="2.1"/><ellipse cx="576" cy="571" rx="1.9" ry="2.3"/><ellipse cx="580.4" cy="585" rx="2.1" ry="2.5"/><ellipse cx="579" cy="598" rx="2.3" ry="2.7"/><ellipse cx="591" cy="562.5" rx="1.4" ry="1.8"/><ellipse cx="550" cy="586" rx="1.5" ry="1.9"/><ellipse cx="594.5" cy="589" rx="1.2" ry="1.6"/></g>
</g>
</g>
</svg>

<!-- friends actions card -->
<div class="a" style="left:634px;top:559.5px;width:226px;height:50px;background:#fff;border-radius:4px 4px 0 0;box-shadow:0 0 7px rgba(0,0,0,.13)"></div>
<div class="t" id="t_acts" style="left:701.5px;top:576px;font-size:12px;color:#666;transform:scaleX(0.950)">Действия друзей</div>

<!-- red highlight -->
<div class="a" style="left:416.2px;top:92.2px;width:69.5px;height:64px;border:4px solid #f80a0a;border-radius:10px;box-shadow:2px 3px 5px rgba(0,0,0,.55),inset 2px 3px 5px rgba(0,0,0,.45)"></div>
</div>

<!-- ===== scrollbars ===== -->
<div id="scroll">
<div class="a" style="left:901px;top:74px;width:16px;height:530px;background:#f0f0f0"></div>
<div class="a" style="left:903px;top:90px;width:12px;height:18px;background:#c1c1c1"></div>
<svg style="left:905.5px;top:80px" width="8" height="4" viewBox="0 0 8 4"><path d="M0 4L3.6 0 7.2 4Z" fill="#a3a3a3"/></svg>
<svg style="left:905.5px;top:593px" width="8" height="4" viewBox="0 0 8 4"><path d="M0 0L3.6 4 7.2 0Z" fill="#505050"/></svg>
<div class="a" style="left:33px;top:604px;width:884px;height:17px;background:#f0f0f0"></div>
<div class="a" style="left:901px;top:604px;width:16px;height:16px;background:#e6e6e6"></div>
<div class="a" style="left:49px;top:606px;width:772px;height:13px;background:#c1c1c1"></div>
<svg style="left:38.5px;top:609px" width="5" height="8" viewBox="0 0 5 8"><path d="M4.4 0L0 3.5 4.4 7Z" fill="#a3a3a3"/></svg>
<svg style="left:891.5px;top:609px" width="5" height="8" viewBox="0 0 5 8"><path d="M0 0L4.4 3.5 0 7Z" fill="#505050"/></svg>
<div class="a" style="left:33px;top:620px;width:884px;height:1px;background:#fff"></div>
</div>

<!-- ===== bottom tab bar ===== -->
<div id="tabs">
<div class="a" style="left:33px;top:621px;width:884px;height:30px;background:#252832"></div>
<svg style="left:43px;top:631px" width="16" height="17" viewBox="0 0 16 17"><ellipse cx="7.5" cy="8.3" rx="7.2" ry="7.8" fill="#f39a1e"/><ellipse cx="7.5" cy="8.3" rx="5.4" ry="5.9" fill="none" stroke="#f7b54a" stroke-width="1"/><path d="M7.5 2.6V14M2.6 5.4L12.4 11.2M12.4 5.4L2.6 11.2" stroke="#e07a10" stroke-width=".8"/></svg>
<div class="t" id="t_lump" style="left:66.7px;top:632.5px;font-size:13px;color:#e4e4e4;transform:scaleX(0.917)">Lumpics.ru</div>
<div class="a" style="left:220.5px;top:621px;width:190px;height:30px;background:#fff;border-radius:7px 7px 0 0"></div>
<svg style="left:231.5px;top:631px" width="15" height="16" viewBox="0 0 15 16"><rect width="15" height="15.4" rx="2" fill="#ee8208"/><circle cx="7.5" cy="5.2" r="2.1" fill="none" stroke="#fff" stroke-width="1.5"/><path d="M4.6 8.6Q7.5 10.6 10.4 8.6" fill="none" stroke="#fff" stroke-width="1.5" stroke-linecap="round"/><path d="M5 12.8L7.5 10 10 12.8" fill="none" stroke="#fff" stroke-width="1.5" stroke-linecap="round" stroke-linejoin="round"/></svg>
<div class="t" id="t_tab" style="left:255.3px;top:632px;font-size:13px;color:#1e1e1e;transform:scaleX(0.937)">Одноклассники</div>
<svg style="left:390px;top:634.5px" width="9" height="9" viewBox="0 0 9 9"><path d="M.4.4L8.4 8.4M8.4.4L.4 8.4" stroke="#333" stroke-width="1.1"/></svg>
<svg style="left:419.5px;top:629.5px" width="20" height="19" viewBox="0 0 20 19"><ellipse cx="9.8" cy="9.4" rx="9.6" ry="9.4" fill="#dcdcdc"/><path d="M9.8 4V14.8M4.4 9.4H15.2" stroke="#2a2a2a" stroke-width="1.4"/></svg>
</div>

</body>
</html>
